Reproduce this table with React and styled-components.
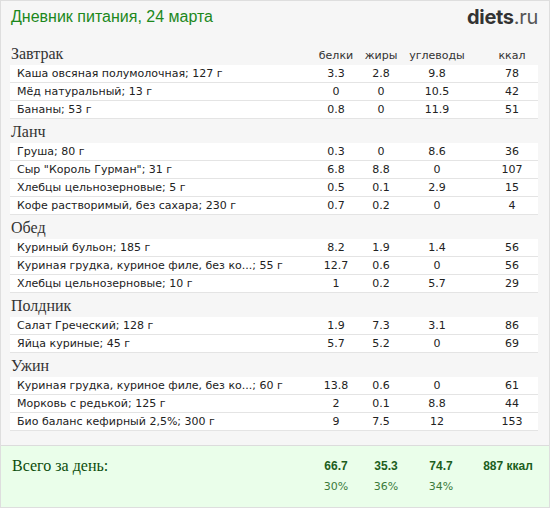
import React from "react";
import styled, { createGlobalStyle } from "styled-components";

const GlobalStyle = createGlobalStyle`
  html, body {
    margin: 0;
    padding: 0;
    background: #ffffff;
  }
`;

const Page = styled.div`
  box-sizing: border-box;
  width: 550px;
  height: 508px;
  border: 1px solid #dedede;
  background-color: #f6f6f6;
  display: flex;
  flex-direction: column;
  font-family: "DejaVu Sans", Verdana, sans-serif;
  color: #222;
`;

const Content = styled.div`
  padding: 4px 11px 0 9px;
`;

const TitleBar = styled.div`
  display: flex;
  justify-content: space-between;
  align-items: center;
  height: 24px;
  margin-bottom: 12px;
`;

const Title = styled.div`
  font-family: "Liberation Sans", Arial, sans-serif;
  font-size: 16px;
  color: #1c881c;
  padding-left: 1px;
`;

const Logo = styled.div`
  font-family: Inter, "Open Sans", sans-serif;
  font-size: 20px;
  letter-spacing: -0.3px;
  color: #333;
  b {
    font-weight: 700;
  }
  span {
    font-weight: 400;
    color: #555;
  }
`;

const grid = `
  display: grid;
  grid-template-columns: 1fr 44px 46px 66px 68px;
  align-items: center;
`;

const SectionHead = styled.div`
  ${grid}
  height: 24px;
`;

const SectionName = styled.div`
  font-family: "Liberation Serif", "Times New Roman", serif;
  font-size: 16px;
  color: #333;
  line-height: 24px;
  padding-left: 1px;
  padding-top: 1px;
`;

const ColLabel = styled.div`
  font-size: 11px;
  color: #333;
  text-align: center;
  padding-left: ${(p) => (p.$last ? "16px" : "0")};
  padding-top: 3px;
`;

const Row = styled.div`
  ${grid}
  height: 17px;
  background: #fff;
  border-bottom: 1px solid #e4e4e4;
  font-size: 11px;
`;

const Name = styled.div`
  padding-left: 7px;
  white-space: nowrap;
  overflow: hidden;
`;

const Cell = styled.div`
  text-align: center;
  padding-left: ${(p) => (p.$last ? "16px" : "0")};
`;

const Footer = styled.div`
  flex: 1;
  margin-top: 14px;
  border-top: 1px solid #dcdcdc;
  background: #eafeea;
  padding: 11px 1px 0 10px;
`;

const FooterLine = styled.div`
  display: grid;
  grid-template-columns: 1fr 44px 56px 54px 80px;
  align-items: center;
  height: 18px;
  margin-bottom: 2px;
`;

const TotalLabel = styled.div`
  font-family: "Liberation Serif", "Times New Roman", serif;
  font-size: 16px;
  color: #0c4d0c;
  padding-left: 1px;
`;

const TotalValue = styled.div`
  font-family: "Liberation Sans", Arial, sans-serif;
  font-weight: 700;
  font-size: 12px;
  color: #1d5e1d;
  text-align: center;
`;

const Percent = styled.div`
  font-size: 11px;
  color: #3b7b3b;
  text-align: center;
`;

const meals = [
  {
    title: "Завтрак",
    items: [
      ["Каша овсяная полумолочная; 127 г", "3.3", "2.8", "9.8", "78"],
      ["Мёд натуральный; 13 г", "0", "0", "10.5", "42"],
      ["Бананы; 53 г", "0.8", "0", "11.9", "51"],
    ],
  },
  {
    title: "Ланч",
    items: [
      ["Груша; 80 г", "0.3", "0", "8.6", "36"],
      ['Сыр "Король Гурман"; 31 г', "6.8", "8.8", "0", "107"],
      ["Хлебцы цельнозерновые; 5 г", "0.5", "0.1", "2.9", "15"],
      ["Кофе растворимый, без сахара; 230 г", "0.7", "0.2", "0", "4"],
    ],
  },
  {
    title: "Обед",
    items: [
      ["Куриный бульон; 185 г", "8.2", "1.9", "1.4", "56"],
      ["Куриная грудка, куриное филе, без ко...; 55 г", "12.7", "0.6", "0", "56"],
      ["Хлебцы цельнозерновые; 10 г", "1", "0.2", "5.7", "29"],
    ],
  },
  {
    title: "Полдник",
    items: [
      ["Салат Греческий; 128 г", "1.9", "7.3", "3.1", "86"],
      ["Яйца куриные; 45 г", "5.7", "5.2", "0", "69"],
    ],
  },
  {
    title: "Ужин",
    items: [
      ["Куриная грудка, куриное филе, без ко...; 60 г", "13.8", "0.6", "0", "61"],
      ["Морковь с редькой; 125 г", "2", "0.1", "8.8", "44"],
      ["Био баланс кефирный 2,5%; 300 г", "9", "7.5", "12", "153"],
    ],
  },
];

const App = () => (
  <>
    <GlobalStyle />
    <Page>
      <Content>
        <TitleBar>
          <Title>Дневник питания, 24 марта</Title>
          <Logo>
            <b>diets</b>
            <span>.ru</span>
          </Logo>
        </TitleBar>
        {meals.map((meal, i) => (
          <div key={meal.title}>
            <SectionHead>
              <SectionName>{meal.title}</SectionName>
              {i === 0 && (
                <>
                  <ColLabel>белки</ColLabel>
                  <ColLabel>жиры</ColLabel>
                  <ColLabel>углеводы</ColLabel>
                  <ColLabel $last>ккал</ColLabel>
                </>
              )}
            </SectionHead>
            {meal.items.map((it, j) => (
              <Row key={j}>
                <Name>{it[0]}</Name>
                <Cell>{it[1]}</Cell>
                <Cell>{it[2]}</Cell>
                <Cell>{it[3]}</Cell>
                <Cell $last>{it[4]}</Cell>
              </Row>
            ))}
          </div>
        ))}
      </Content>
      <Footer>
        <FooterLine>
          <TotalLabel>Всего за день:</TotalLabel>
          <TotalValue>66.7</TotalValue>
          <TotalValue>35.3</TotalValue>
          <TotalValue>74.7</TotalValue>
          <TotalValue>887 ккал</TotalValue>
        </FooterLine>
        <FooterLine>
          <div />
          <Percent>30%</Percent>
          <Percent>36%</Percent>
          <Percent>34%</Percent>
          <div />
        </FooterLine>
      </Footer>
    </Page>
  </>
);

export default App;
